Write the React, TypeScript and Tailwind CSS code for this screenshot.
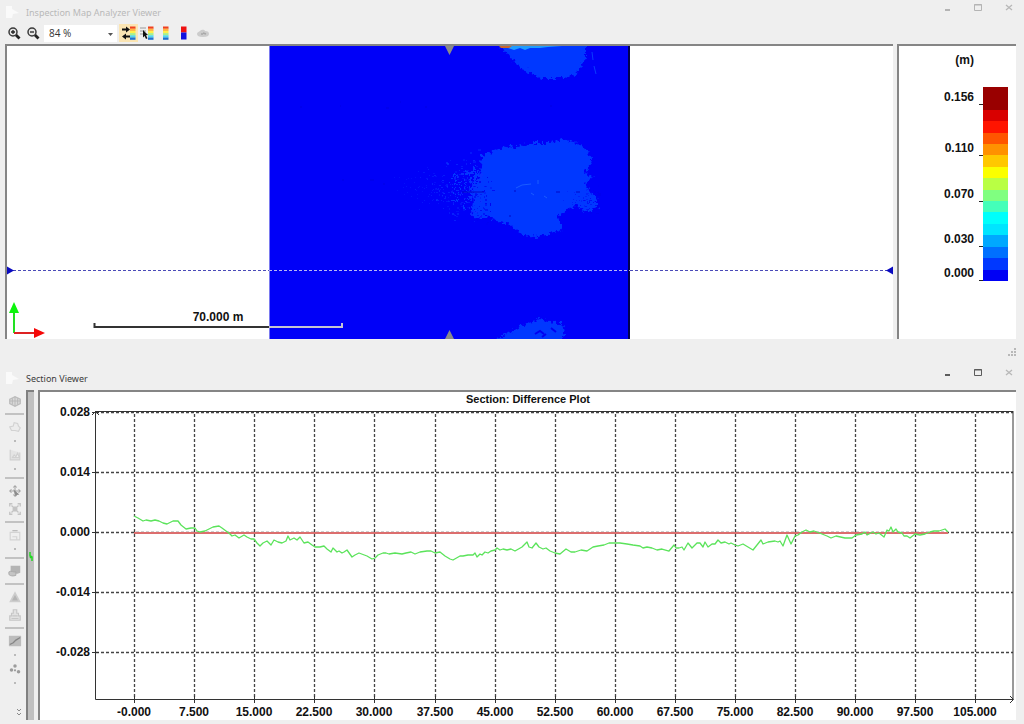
import { useState } from "react";
import type { ReactNode } from "react";

const JET = ["#f0401f", "#ffb347", "#fff04a", "#a8f08a", "#4fd8f0", "#1f70d0"];

const LEGEND_COLORS = [
  "#d90000", "#ff1400", "#ff5500", "#ff9100", "#ffc800", "#fbff00", "#b9ff44", "#80ff80",
  "#44ffb9", "#00fffb", "#00e5ff", "#00a8ff", "#0070ff", "#0038ff", "#0000f5",
];

const LEGEND_LABELS = [
  { value: "0.156", height: "h-[18px]" },
  { value: "0.110", height: "h-[51px]" },
  { value: "0.070", height: "h-[46px]" },
  { value: "0.030", height: "h-[45px]" },
  { value: "0.000", height: "h-[34px]" },
];

const X_LABELS = [
  "-0.000", "7.500", "15.000", "22.500", "30.000", "37.500", "45.000", "52.500",
  "60.000", "67.500", "75.000", "82.500", "90.000", "97.500", "105.000",
];
const Y_LABELS = ["0.028", "0.014", "0.000", "-0.014", "-0.028"];

const PROFILE =
  "134,516 138,518 143,521 146,520 151,521 155,520 159,521 163,523 167,524 173,521 178,521 181,525 186,529 191,528 195,528 " +
  "197,531 200,532 205,531 209,529 213,527 219,526 222,528 226,531 230,534 232,536 235,535 239,538 244,535 247,537 251,539 " +
  "254,539 257,543 260,546 263,543 267,541 271,545 274,540 278,542 282,543 286,541 288,536 290,540 294,538 297,540 300,537 " +
  "304,543 308,542 312,545 315,547 320,547 324,546 327,549 331,552 333,548 335,550 337,552 339,551 342,553 344,552 347,550 " +
  "352,557 355,555 359,553 367,556 372,559 375,558 378,555 383,553 386,553 389,554 395,553 402,554 406,553 411,552 415,554 " +
  "420,552 427,551 431,551 435,553 440,552 445,556 450,559 453,560 460,556 463,556 468,555 473,555 475,553 477,557 480,554 " +
  "482,555 485,552 488,553 491,551 495,550 497,548 500,550 503,549 507,550 511,549 515,551 522,547 527,542 529,547 532,548 " +
  "536,543 539,547 543,549 546,548 550,551 555,553 560,554 566,549 571,552 575,552 581,550 587,551 593,547 598,546 604,545 " +
  "609,543 620,543 627,544 633,545 640,546 643,548 647,547 652,548 657,550 662,549 669,551 674,545 676,548 679,548 682,547 " +
  "684,550 688,543 692,548 697,543 700,543 703,547 705,542 708,547 712,544 715,544 718,540 721,543 725,542 729,544 731,543 " +
  "735,545 738,546 743,544 748,547 753,550 757,545 761,540 763,544 768,542 775,541 778,542 780,541 783,546 787,535 791,544 " +
  "795,536 798,535 802,532 806,530 810,532 814,531 822,534 827,536 831,538 836,536 845,538 852,538 856,535 862,534 865,532 " +
  "867,535 873,532 876,534 879,533 884,537 887,530 889,531 891,527 893,532 896,529 898,532 902,533 904,536 907,536 910,538 " +
  "915,534 920,535 925,534 930,532 934,531 939,531 945,529 948,532";

// Small seeded generator so the speckle pattern stays the same on every render
function seeded(seed: number) {
  let s = seed;
  return () => {
    s = (s * 16807) % 2147483647;
    return s / 2147483647;
  };
}

function speckle(count: number, seed: number, x0: number, x1: number, y: number, spread: number) {
  const rnd = seeded(seed);
  const out: { x: number; y: number; w: number; h: number; o: number }[] = [];
  for (let i = 0; i < count; i++) {
    const t = Math.sqrt(rnd());
    out.push({
      x: Math.round(x0 + t * (x1 - x0)),
      y: Math.round(y + (rnd() + rnd() - 1) * spread * (0.4 + t * 0.6)),
      w: 1 + Math.floor(rnd() * 3 * t),
      h: 1 + Math.floor(rnd() * 2.4 * t),
      o: 0.25 + t * 0.75 * rnd(),
    });
  }
  return out;
}

const TAIL = speckle(260, 77, 392, 480, 188, 40);
const NEAR = speckle(130, 5150, 446, 484, 186, 38);
const HOLES = speckle(70, 1234, 450, 492, 200, 30);
const EDGE = speckle(55, 991, 560, 598, 199, 19);

function AppIcon() {
  return (
    <svg className="h-4 w-4" viewBox="0 0 16 16" aria-hidden="true">
      <path d="M0 2h6v3l7 4-6 1-1 4H0z" fill="#fafafa" />
    </svg>
  );
}

function WindowButtons({ active }: { active: boolean }) {
  const tone = active ? "text-[#5c5c5c]" : "text-[#b4b4b4]";
  return (
    <div className={`ml-auto flex gap-[15px] self-start ${tone}`}>
      <button type="button" aria-label="Minimize" className="h-4 w-4">
        <svg viewBox="0 0 16 16" stroke="currentColor" strokeWidth="2">
          <path d="M6 10h5" />
        </svg>
      </button>
      <button type="button" aria-label="Maximize" className="h-4 w-4">
        <svg viewBox="0 0 16 16" fill="none" stroke="currentColor">
          <path d="M4.500 4.500h7v6h-7z M4 5h8" />
        </svg>
      </button>
      <button type="button" aria-label="Close" className="h-4 w-4 text-[#b8b8b8]">
        <svg viewBox="0 0 16 16" stroke="currentColor" strokeWidth="1.300">
          <path d="M5 5l6 5M11 5l-6 5" />
        </svg>
      </button>
    </div>
  );
}

function ToolButton({ label, active, children }: { label: string; active?: boolean; children: ReactNode }) {
  return (
    <button
      type="button"
      aria-label={label}
      title={label}
      aria-pressed={active}
      className={`flex h-[18px] w-[19px] items-center justify-center ${active ? "bg-[#fbe5b3]" : ""}`}
    >
      <svg className="h-4 w-4" viewBox="0 0 16 16" fill="none">
        {children}
      </svg>
    </button>
  );
}

function JetBar({ x }: { x: number }) {
  return (
    <>
      {JET.map((c, i) => (
        <rect key={c} x={x} y={1.5 + i * 2.2} width="5.500" height="2.300" fill={c} />
      ))}
    </>
  );
}

function Magnifier({ plus }: { plus?: boolean }) {
  return (
    <>
      <circle cx="7" cy="7" r="4" fill="#e6e6e6" stroke="#3a3a3a" strokeWidth="1.500" />
      <path d="M10 10l3.500 3.500" stroke="#222" strokeWidth="2.800" />
      <path d={plus ? "M5 7h4M7 5v4" : "M5 7h4"} stroke="#222" strokeWidth="1.300" />
    </>
  );
}

function Toolbar() {
  const [zoom, setZoom] = useState("84 %");
  return (
    <div className="mb-0.5 flex h-[18px] items-center pl-1">
      <ToolButton label="Zoom in"><Magnifier plus /></ToolButton>
      <ToolButton label="Zoom out"><Magnifier /></ToolButton>
      <div className="relative mx-0.5">
        <select
          aria-label="Zoom level"
          value={zoom}
          onChange={(e) => setZoom(e.target.value)}
          className="block h-[17px] w-[73px] appearance-none bg-white pl-[5px] text-[10px] leading-4 text-[#333]"
        >
          <option>50 %</option>
          <option>84 %</option>
          <option>100 %</option>
        </select>
        <svg className="pointer-events-none absolute right-1 top-2 h-[3px] w-[5px]" viewBox="0 0 5 3" aria-hidden="true">
          <path d="M0 0h5L2.500 3z" fill="#555" />
        </svg>
      </div>
      <ToolButton label="Link color scale" active>
        <path d="M1 4.500h5M4 11.500h5" stroke="#111" strokeWidth="2" />
        <path d="M5 1.500l4 3-4 3zM5 8.500l-4 3 4 3z" fill="#111" />
        <JetBar x={9} />
      </ToolButton>
      <ToolButton label="Pick color scale">
        <path d="M0 3h6M0 6h6M0 9h3" stroke="#999" />
        <path d="M3 5l5 5-2 .3 1.500 3-1.500.7-1.400-3L3 12.500z" fill="#111" />
        <JetBar x={8} />
      </ToolButton>
      <ToolButton label="Color scale"><JetBar x={4} /></ToolButton>
      <ToolButton label="Two colors">
        <path d="M3 1.500h5.500v6H3z" fill="#ee1111" />
        <path d="M3 7.500h5.500v7H3z" fill="#1111e0" />
      </ToolButton>
      <ToolButton label="Snapshot">
        <path d="M0 9c0-2 2-2 3-3s4-2 5 0c3 0 4 1 4 3s-2 3-6 3-6-1-6-3z" fill="#cccccc" />
        <path d="M4 9h2M6 8l3 1" stroke="#a8a8a8" strokeWidth="1.500" />
      </ToolButton>
    </div>
  );
}

function InspectionMap() {
  return (
    <svg className="block w-full" viewBox="7 46 886 293" role="img" aria-label="Inspection map">
      <defs>
        <filter id="ragged" x="-10%" y="-10%" width="120%" height="120%">
          <feTurbulence type="fractalNoise" baseFrequency="0.3" numOctaves="2" seed="4" />
          <feDisplacementMap in="SourceGraphic" scale="9" xChannelSelector="R" yChannelSelector="G" />
        </filter>
        <clipPath id="mapArea">
          <rect x="269" y="46" width="361" height="293" />
        </clipPath>
      </defs>
      <rect x="7" y="46" width="886" height="293" fill="#fff" />
      <rect x="269" y="46" width="361" height="293" fill="#0000f8" />

      <g clipPath="url(#mapArea)">
        <g fill="#0538ff" filter="url(#ragged)">
          <path d="M482 155L490 152 507 146 518 147 533 143 550 143 562 139 577 143 585 148 592 158 588 168 585 173 593 177 585 183 588 190 596 197 598 207 585 212 577 205 567 210 558 217 562 230 550 233 537 237 523 235 517 230 508 223 498 222 490 217 475 217 472 210 473 200 472 193 477 183 480 173z" />
          <path d="M498 40L500 46 508 53 515 63 527 72 543 79 560 79 575 75 582 65 586 57 586 40z" />
          <path d="M493 342L510 332 523 325 540 319 553 323 562 323 564 333 562 342z" />
          {NEAR.map((p, i) => (
            <rect key={i} x={p.x} y={p.y} width={p.w + 1} height={p.h} />
          ))}
        </g>
        {TAIL.map((p, i) => (
          <rect key={i} x={p.x} y={p.y} width={p.w} height={p.h} fill="#0a34ff" opacity={p.o} />
        ))}
        {HOLES.map((p, i) => (
          <rect key={i} x={p.x} y={p.y} width={p.w} height={p.h} fill="#0000f0" opacity={p.o} />
        ))}
        {EDGE.map((p, i) => (
          <rect key={i} x={p.x} y={p.y} width={p.w} height={p.h} fill="#0000f0" opacity={p.o} />
        ))}
        <path d="M516 188l6-3 9-1M531 193l3 2M544 196l3 2M538 180v4" stroke="#1a5cff" fill="none" />
        <path d="M514 191h2M556 192h4M509 216h2M576 192h4M462 192h22" stroke="#0008c8" />
        <path d="M535 334l5-3 4 3M551 328l5 4M542 337l4-3" stroke="#0000f0" strokeWidth="2" fill="none" />
        <path d="M592 52l1 8M594 66l2 8" stroke="#0a3cff" />
        <path d="M508 48l6 2 6-2 5 2 5-2 10 0 8-1 14-1H508z" fill="#1f9cff" />
        <path d="M499 46h13l-3 2h-8z" fill="#c8652e" />
        <path d="M300 107h2M340 106h1M386 108h3M400 102h1M425 107h2M550 106h2M370 180h4M383 184h2M342 180h2" stroke="#0000e2" />
      </g>
      <path d="M269.500 46v293" stroke="#7a7af0" />
      <path d="M629 46v293" stroke="#000050" strokeWidth="2" />

      <path d="M445 46h9l-4.500 9zM445 339h9l-4.500-9z" fill="#8a8a8a" />

      <path d="M13 270.500h256M630 270.500h258" stroke="#4a4ab8" strokeDasharray="3 2" />
      <path d="M269 270.500h361" stroke="#b9b9f5" strokeDasharray="3 2" />
      <path d="M7 266.500v8l7-4zM893 266.500v8l-7-4z" fill="#0a0ac0" />

      <path d="M94.500 323v4H269" stroke="#333" strokeWidth="2" fill="none" />
      <path d="M269 327h73v-4" stroke="#c4c4d2" strokeWidth="2" fill="none" />
      <text x="218" y="321" textAnchor="middle" className="fill-[#111] text-[12px] font-bold">70.000 m</text>

      <path d="M14 333V310" stroke="#22e022" strokeWidth="2" />
      <path d="M9 313l5-11 5 11z" fill="#0cf50c" />
      <path d="M14 333h22" stroke="#dd2222" strokeWidth="2" />
      <path d="M34 328l11 5-11 5z" fill="#f50808" />
    </svg>
  );
}

function ColorLegend() {
  return (
    <div className="w-[119px] shrink-0 border-l-2 border-t-2 border-[#858585] bg-white pr-2 text-[12px] font-bold text-[#111]">
      <div className="pr-[34px] pt-1.5 text-right leading-4">(m)</div>
      <div className="mt-[19px] flex justify-end">
        <div>
          {LEGEND_LABELS.map((l) => (
            <div key={l.value} className={`flex items-end justify-end gap-[5px] ${l.height}`}>
              <span className="leading-4">{l.value}</span>
              <span className="h-px w-1 bg-[#222]" />
            </div>
          ))}
        </div>
        <div className="flex w-[25px] flex-col">
          <span className="flex-[2] bg-[#990000]" />
          {LEGEND_COLORS.map((c) => (
            <span key={c} className="flex-1" style={{ backgroundColor: c }} />
          ))}
        </div>
      </div>
    </div>
  );
}

function DifferencePlot() {
  return (
    <svg className="block w-full" viewBox="40 392 976 328" role="img" aria-label="Section difference plot">
      <rect x="40" y="392" width="976" height="328" fill="#fff" />
      <text x="528" y="403" textAnchor="middle" className="fill-[#111] text-[11px] font-bold">
        Section: Difference Plot
      </text>
      <g stroke="#444" strokeWidth="1.300" strokeDasharray="3 2" fill="none">
        {X_LABELS.map((l, i) => (
          <path key={l} d={`M${Math.round(134 + i * 60.1) + 0.5} 414V699`} />
        ))}
        {Y_LABELS.map((l, i) => (
          <path key={l} d={`M96 ${412.5 + i * 60}H1013`} />
        ))}
      </g>
      <path d="M96 411.500H1013" stroke="#333" />
      <path d="M95.500 411V699.500H1013V411" stroke="#333" fill="none" />
      <path d="M92 415l3.500-3.500 3.500 3.500M1010 696l3.500 3.500-3.500 3.500" stroke="#333" fill="none" />
      <g className="fill-[#111] text-[12px] font-bold">
        {X_LABELS.map((l, i) => {
          const x = Math.round(134 + i * 60.1);
          return (
            <g key={l}>
              <path d={`M${x + 0.5} 696v7`} stroke="#333" />
              <text x={x} y="716" textAnchor="middle">{l}</text>
            </g>
          );
        })}
        {Y_LABELS.map((l, i) => (
          <g key={l}>
            <path d={`M92 ${412.5 + i * 60}h7`} stroke="#333" />
            <text x="90" y={416 + i * 60} textAnchor="end">{l}</text>
          </g>
        ))}
      </g>
      <path d="M134 533H948" stroke="#dc6e6e" strokeWidth="2" />
      <polyline points={PROFILE} fill="none" stroke="#5be35b" strokeWidth="1.300" strokeLinejoin="round" />
    </svg>
  );
}

type SideItem = { kind: "icon"; label: string; art: ReactNode } | { kind: "more" } | { kind: "rule" };

const SIDE_ITEMS: SideItem[] = [
  {
    kind: "icon",
    label: "Section plane",
    art: (
      <>
        <path d="M2 6l6-3 6 3v5l-6 3-6-3z" fill="#d8d8d8" stroke="#bdbdbd" strokeWidth="1.500" />
        <path d="M8 3v11M2 8h12M5 5v7M11 5v7" stroke="#b6b6b6" />
      </>
    ),
  },
  { kind: "rule" },
  { kind: "icon", label: "Polyline", art: <path d="M4 12L2 8l4-1 1-4 4 1 1 3 2 2-2 4-4-1z" stroke="#d2d2d2" strokeWidth="1.300" fill="#ececec" /> },
  { kind: "more" },
  { kind: "icon", label: "Extents", art: <path d="M2.500 2v11.500h11V5M5 11l2-3 2 2 2-4 2 5z" stroke="#d0d0d0" strokeWidth="1.300" fill="#e4e4e4" /> },
  { kind: "more" },
  { kind: "rule" },
  {
    kind: "icon",
    label: "Pan",
    art: (
      <>
        <path d="M8 3v10M3 8h10M6 4l2-2 2 2M6 12l2 2 2-2M4 6L2 8l2 2M12 6l2 2-2 2" stroke="#a6a6a6" fill="none" strokeWidth="1.200" />
        <path d="M6 6l7 6-3 .5-1 2z" fill="#8c8c8c" />
      </>
    ),
  },
  {
    kind: "icon",
    label: "Fit all",
    art: <path d="M2 5V2h3M11 2h3v3M14 11v3h-3M5 14H2v-3M4 4l8 8M12 4l-8 8M6 6h4v4H6z" stroke="#c4c4c4" strokeWidth="1.500" fill="none" />,
  },
  { kind: "rule" },
  {
    kind: "icon",
    label: "Dimension",
    art: (
      <>
        <path d="M2.500 5h11v8.500h-11zM5 10h5v3" stroke="#d4d4d4" strokeWidth="1.300" fill="#efefef" />
        <path d="M5 3h6" stroke="#bcbcbc" strokeWidth="1.500" />
      </>
    ),
  },
  { kind: "more" },
  { kind: "rule" },
  {
    kind: "icon",
    label: "Surface",
    art: (
      <>
        <path d="M3 2h11v8l-3 1H3z" fill="#b4b4b4" />
        <path d="M1 9c3-2 5 1 8 0v4c-3 1-6 1-8-1z" fill="#c4c4c4" stroke="#a8a8a8" />
      </>
    ),
  },
  { kind: "rule" },
  { kind: "icon", label: "Triangle", art: <path d="M8 3.500L13 13H3z" fill="#b4b4b4" stroke="#cdcdcd" strokeWidth="2" /> },
  { kind: "icon", label: "Export", art: <path d="M6 2h4v4h2v3h2v5H2V9h2V6h2zM5 9h6M4 12h8" stroke="#c6c6c6" strokeWidth="1.300" fill="#e2e2e2" /> },
  { kind: "rule" },
  {
    kind: "icon",
    label: "Slope",
    art: (
      <>
        <path d="M1 2h14v12H1z" fill="#bcbcbc" />
        <path d="M2 12l4-2 3-3 5-3" stroke="#858585" strokeWidth="1.500" fill="none" />
      </>
    ),
  },
  { kind: "more" },
  {
    kind: "icon",
    label: "Points",
    art: (
      <g fill="#9c9c9c">
        <circle cx="8" cy="4.500" r="2" />
        <circle cx="4" cy="9" r="2" />
        <circle cx="12" cy="11" r="2" />
        <circle cx="8" cy="9.500" r="1.300" />
      </g>
    ),
  },
  { kind: "more" },
];

function SideToolbar() {
  return (
    <div className="flex w-[19px] shrink-0 flex-col pt-0.5">
      {SIDE_ITEMS.map((item, i) => {
        if (item.kind === "rule") return <hr key={i} className="my-[3px] border-t-2 border-[#c2c2c2]" />;
        if (item.kind === "more") {
          return (
            <button key={i} type="button" aria-label="More" className="flex h-2.5 items-center justify-center">
              <span className="h-0.5 w-0.5 rounded-full bg-[#a8a8a8]" />
            </button>
          );
        }
        return (
          <button key={i} type="button" aria-label={item.label} className="flex h-[18px] items-center justify-center">
            <svg className="h-[14px] w-[14px]" viewBox="0 0 16 16">{item.art}</svg>
          </button>
        );
      })}
      <button type="button" aria-label="Show more tools" className="mt-auto flex h-3 justify-end pr-0.5">
        <svg className="h-2 w-1.5" viewBox="0 0 6 8" fill="none" stroke="#8a8a8a">
          <path d="M1 1l2 2 2-2M1 5l2 2 2-2" />
        </svg>
      </button>
    </div>
  );
}

export default function App() {
  return (
    <main className="min-h-screen bg-[#efefef] pb-1 font-['Liberation_Sans',Arial,sans-serif]">
      {/* Map window */}
      <section>
        <header className="flex h-6 items-center gap-1 pl-1.5 pr-[7px]">
          <AppIcon />
          <h1 className="pt-0.5 font-['Noto_Sans','Open_Sans',sans-serif] text-[9px] leading-4 text-[#b9b9b9]">
            Inspection Map Analyzer Viewer
          </h1>
          <WindowButtons active={false} />
        </header>
        <div className="font-['Open_Sans','Noto_Sans',sans-serif]">
          <Toolbar />
        </div>
        <div className="flex gap-1 pl-[5px] pr-[8px]">
          <div className="min-w-0 flex-1 border-l-2 border-t-2 border-[#858585] bg-white">
            <InspectionMap />
          </div>
          <ColorLegend />
        </div>
        <div className="flex h-[26px] items-center justify-end pr-2">
          <svg className="h-2 w-2" viewBox="0 0 8 8" fill="#b8b8b8" aria-hidden="true">
            <path d="M6 0h2v2H6zM3 3h2v2H3zM6 3h2v2H6zM0 6h2v2H0zM3 6h2v2H3zM6 6h2v2H6z" />
          </svg>
        </div>
      </section>

      {/* Section window */}
      <section>
        <header className="flex h-[25px] items-center gap-1 pl-1.5 pr-[7px]">
          <AppIcon />
          <h2 className="pt-[3px] font-['Noto_Sans','Open_Sans',sans-serif] text-[9px] leading-4 text-[#3c3c3c]">
            Section Viewer
          </h2>
          <WindowButtons active />
        </header>
        <div className="flex pl-[5px] pr-2">
          <SideToolbar />
          <div role="separator" aria-orientation="vertical" className="ml-0.5 w-2 shrink-0 border-l-2 border-t-2 border-[#808080] bg-[#c0c0c0] pt-[160px]">
            <svg className="h-2.5 w-1.5" viewBox="0 0 6 10" fill="none" stroke="#22d822" strokeWidth="1.500" aria-hidden="true">
              <path d="M2 0v4l2 1v4M4 4L2 6" />
            </svg>
          </div>
          <div className="ml-1 min-w-0 flex-1 border-l-2 border-t-2 border-[#858585] bg-white">
            <DifferencePlot />
          </div>
        </div>
      </section>
    </main>
  );
}
